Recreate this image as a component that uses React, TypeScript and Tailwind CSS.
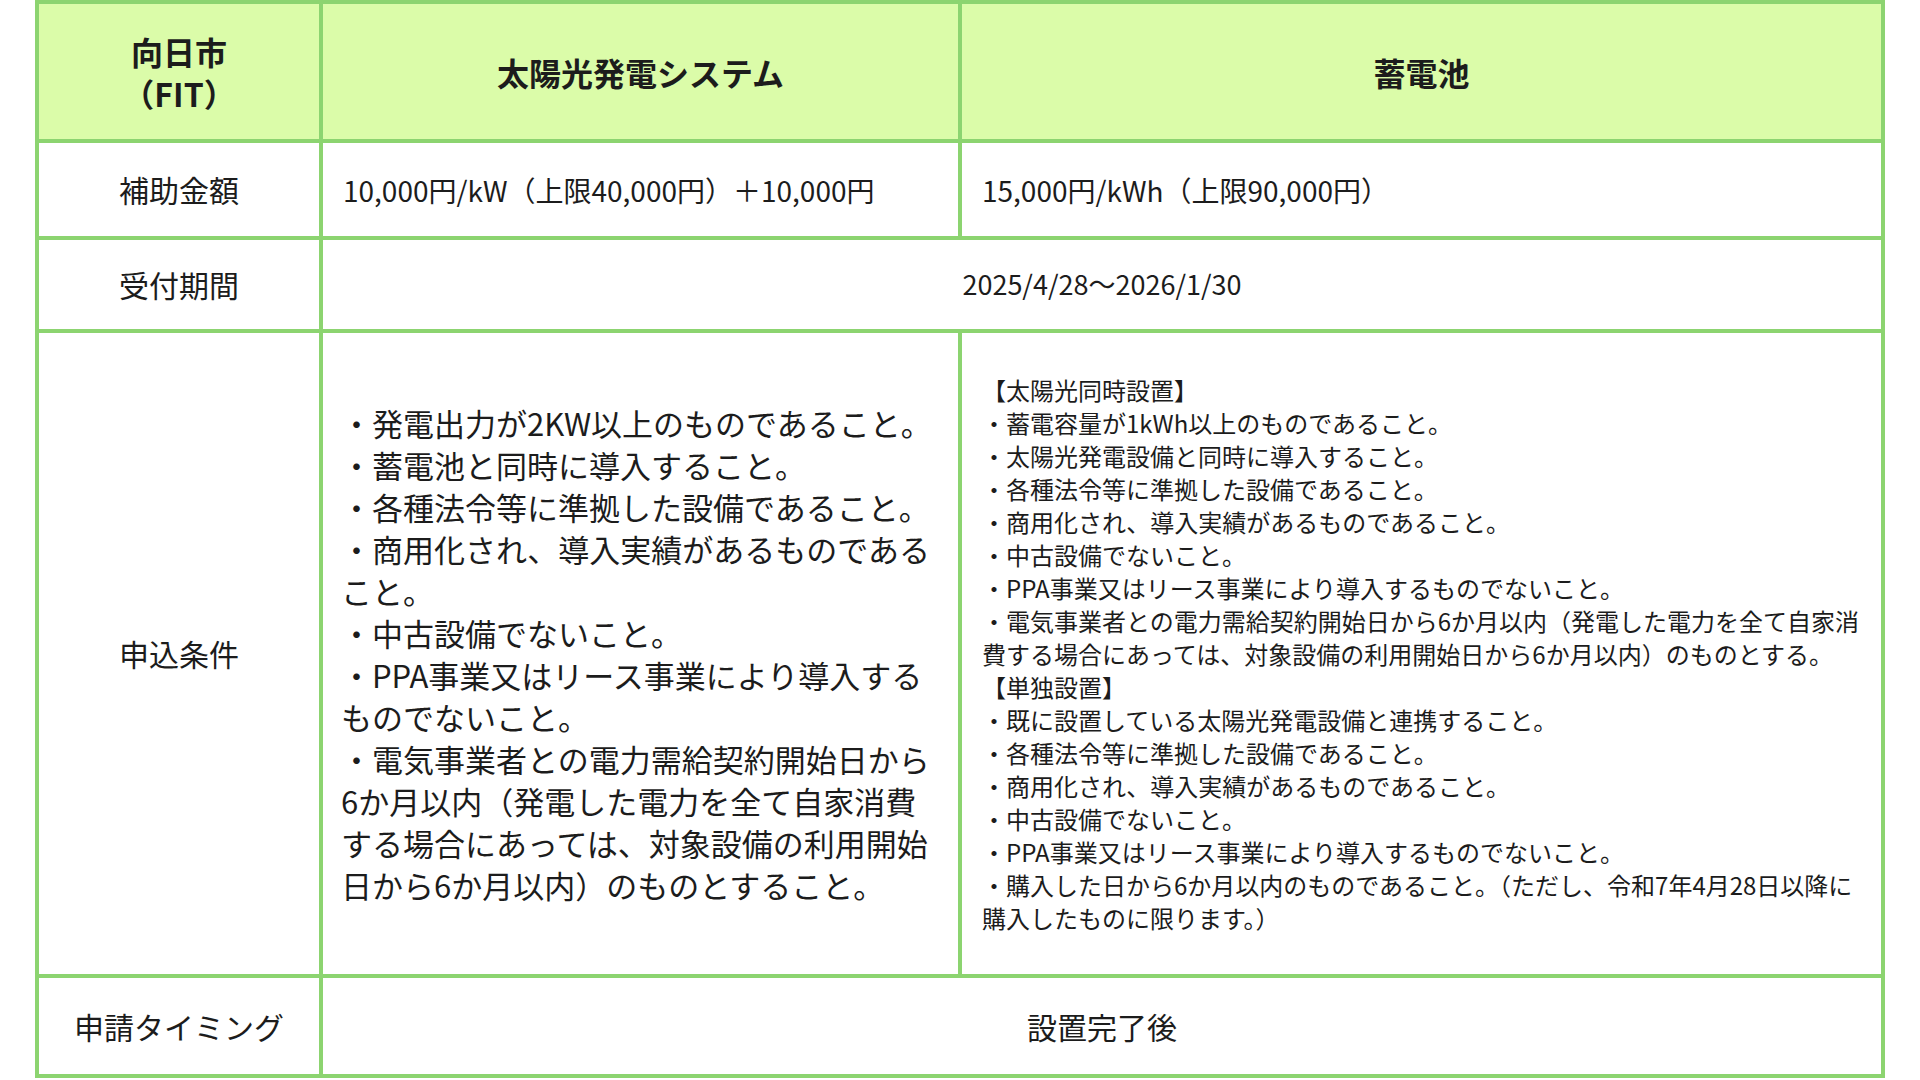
import React from 'react';

const solarItems = [
  '・発電出力が2KW以上のものであること。',
  '・蓄電池と同時に導入すること。',
  '・各種法令等に準拠した設備であること。',
  '・商用化され、導入実績があるものであること。',
  '・中古設備でないこと。',
  '・PPA事業又はリース事業により導入するものでないこと。',
  '・電気事業者との電力需給契約開始日から6か月以内（発電した電力を全て自家消費する場合にあっては、対象設備の利用開始日から6か月以内）のものとすること。',
];

const batteryItems = [
  '【太陽光同時設置】',
  '・蓄電容量が1kWh以上のものであること。',
  '・太陽光発電設備と同時に導入すること。',
  '・各種法令等に準拠した設備であること。',
  '・商用化され、導入実績があるものであること。',
  '・中古設備でないこと。',
  '・PPA事業又はリース事業により導入するものでないこと。',
  '・電気事業者との電力需給契約開始日から6か月以内（発電した電力を全て自家消費する場合にあっては、対象設備の利用開始日から6か月以内）のものとする。',
  '【単独設置】',
  '・既に設置している太陽光発電設備と連携すること。',
  '・各種法令等に準拠した設備であること。',
  '・商用化され、導入実績があるものであること。',
  '・中古設備でないこと。',
  '・PPA事業又はリース事業により導入するものでないこと。',
  '・購入した日から6か月以内のものであること。（ただし、令和7年4月28日以降に購入したものに限ります。）',
];

const Label: React.FC<{ children: React.ReactNode }> = ({ children }) => (
  <div className="flex items-center justify-center bg-white text-[30px]">{children}</div>
);

export default function App() {
  return (
    <div className="h-[1080px] w-[1920px] bg-white font-['Noto_Sans_CJK_JP',sans-serif] text-[#1c1c1c]">
      <div className="ml-[35px] grid w-[1850px] grid-cols-[280px_635px_919px] grid-rows-[135px_93px_89px_641px_96px] gap-[4px] bg-[#8cd470] p-[4px]">
        {/* header */}
        <div className="flex flex-col items-center justify-center bg-[#dbfca9] text-[32px] font-bold leading-[42px]">
          <span>向日市</span>
          <span>（FIT）</span>
        </div>
        <div className="flex items-center justify-center bg-[#dbfca9] text-[32px] font-bold">太陽光発電システム</div>
        <div className="flex items-center justify-center bg-[#dbfca9] text-[32px] font-bold">蓄電池</div>

        {/* 補助金額 */}
        <Label>補助金額</Label>
        <div className="flex items-center bg-white pl-[20px] text-[28px]">10,000円/kW（上限40,000円）＋10,000円</div>
        <div className="flex items-center bg-white pl-[20px] text-[28px]">15,000円/kWh（上限90,000円）</div>

        {/* 受付期間 */}
        <Label>受付期間</Label>
        <div className="col-span-2 flex items-center justify-center bg-white text-[27px]">2025/4/28〜2026/1/30</div>

        {/* 申込条件 */}
        <Label>申込条件</Label>
        <div className="flex items-center bg-white pl-[18px]">
          <div className="w-[598px] text-[31px] leading-[42px]">
            {solarItems.map((t) => (
              <p key={t}>{t}</p>
            ))}
          </div>
        </div>
        <div className="flex items-center bg-white pl-[20px]">
          <div className="w-[886px] text-[24px] leading-[33px]">
            {batteryItems.map((t, i) => (
              <p key={i}>{t}</p>
            ))}
          </div>
        </div>

        {/* 申請タイミング */}
        <Label>申請タイミング</Label>
        <div className="col-span-2 flex items-center justify-center bg-white text-[30px]">設置完了後</div>
      </div>
    </div>
  );
}
